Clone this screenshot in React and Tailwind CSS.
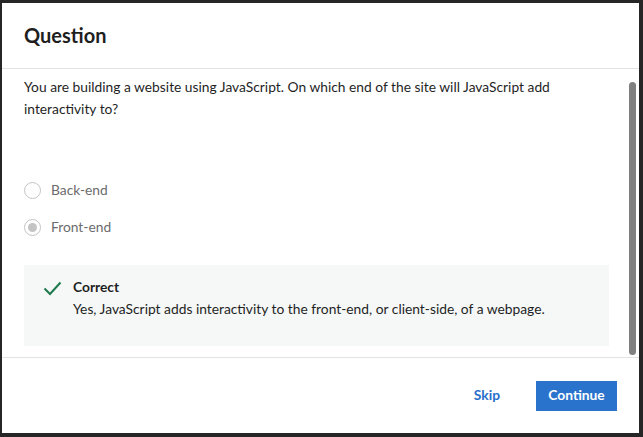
import React from "react";

const FONT = { fontFamily: "Lato, 'Noto Sans', sans-serif" };

function Radio({ label, checked }) {
  return (
    <label className="flex items-center h-[22px] gap-[10px]">
      <span className="w-[17px] h-[17px] rounded-full border-[1.5px] border-[#c4c4c4] flex items-center justify-center">
        {checked && <span className="w-[9px] h-[9px] rounded-full bg-[#c4c4c4]" />}
      </span>
      <span className="text-[13.8px] text-[#6b6b6b]">{label}</span>
    </label>
  );
}

export default function App() {
  return (
    <div className="h-[437px] w-[643px] bg-[#262626] pt-[3px] pl-[2px] pr-[4px] pb-[4px]" style={FONT}>
      <div className="h-[430px] bg-white flex flex-col">
        {/* header */}
        <div className="h-[66px] shrink-0 flex items-center px-[22px] pb-[2px] border-b border-[#e3e3e3]">
          <h2 className="text-[20px] font-bold text-[#1f1f1f] leading-none">Question</h2>
        </div>

        {/* body */}
        <div className="flex-1 flex min-h-0">
          <div className="flex-1 pl-[22px] pr-[20px] pt-[7px]">
            <p className="text-[13.8px] leading-[22px] text-[#1f1f1f]">
              You are building a website using JavaScript. On which end of the site will JavaScript add interactivity to?
            </p>
            <div className="mt-[59px] flex flex-col gap-[15px]">
              <Radio label="Back-end" />
              <Radio label="Front-end" checked />
            </div>
            <div className="mt-[27px] h-[81px] bg-[#f5f8f7] flex items-start pl-[19px] pt-[11px]">
              <svg width="19" height="15" viewBox="0 0 19 15" className="mt-[5px] shrink-0">
                <path d="M1.5 7.5 L7 13 L17.5 1.5" fill="none" stroke="#1e7a4c" strokeWidth="2" />
              </svg>
              <div className="ml-[11px]">
                <div className="text-[13.8px] leading-[22px] font-bold text-[#1f1f1f]">Correct</div>
                <div className="text-[13.8px] leading-[22px] text-[#1f1f1f]">
                  Yes, JavaScript adds interactivity to the front-end, or client-side, of a webpage.
                </div>
              </div>
            </div>
          </div>
          <div className="w-[10px] shrink-0 pt-[13px] pb-[2px] pr-[2px]">
            <div className="w-[7px] h-full rounded-full bg-[#808080]" />
          </div>
        </div>

        {/* footer */}
        <div className="h-[76px] shrink-0 border-t border-[#e3e3e3] flex items-center justify-end pr-[22px] gap-[36px]">
          <button className="text-[13.8px] font-bold text-[#2a6fc9]">Skip</button>
          <button className="w-[81px] h-[30px] bg-[#2a73cc] text-white text-[13.8px] font-bold">Continue</button>
        </div>
      </div>
    </div>
  );
}
